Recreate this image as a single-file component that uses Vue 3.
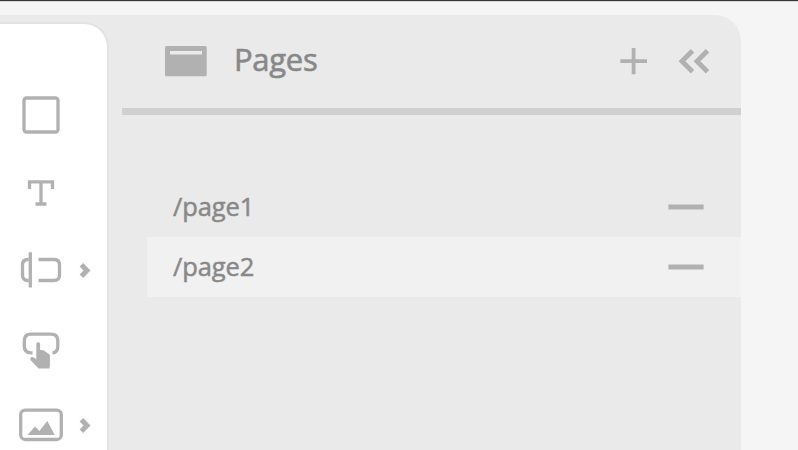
<script setup>
const pages = [
  { name: '/page1', selected: false },
  { name: '/page2', selected: true },
]
</script>

<template>
  <div class="editor">
    <div class="workspace">
      <nav class="tools">
        <div class="tool rect">
          <svg width="38" height="38" viewBox="22 96 38 38"><rect x="24" y="98" width="34" height="34" rx="2.5" class="line" /></svg>
        </div>
        <div class="tool type">
          <svg width="28" height="28" viewBox="27 179 28 28"><path d="M29.5 189V181.8H52.5V189M41 181.8V204M35.5 204H46.5" class="line" /></svg>
        </div>
        <div class="tool input">
          <svg width="42" height="38" viewBox="20 251 42 38"><path d="M28.5 259.5H28Q22.5 259.5 22.5 265V275Q22.5 280.5 28 280.5H28.5M38.5 259.5H54Q59.5 259.5 59.5 265V275Q59.5 280.5 54 280.5H38.5M30.3 252.3V287.5" class="line" /></svg>
          <svg class="more" width="12" height="18" viewBox="79 261 12 18"><path d="M81.4 264.7L87 270.5L81.4 276.3" class="chevron" /></svg>
        </div>
        <div class="tool button">
          <svg width="38" height="38" viewBox="22 332 38 38"><path d="M32.5 352.8H31Q24.3 352.8 24.3 346V341Q24.3 334.2 31 334.2H51Q57.8 334.2 57.8 341V346Q57.8 352.8 52.5 352.8" class="line" /><path d="M36.3 344Q36.3 342.2 38.2 342.2Q40.1 342.2 40.1 344V350L43.5 350.3L49.9 354.7V366L49.3 368.5H38.5L30.5 360Q29.6 358 31.5 357.1Q33 356.6 36.3 359.3Z" class="solid" /></svg>
        </div>
        <div class="tool image">
          <svg width="44" height="34" viewBox="19 408 44 34"><rect x="20.7" y="410.2" width="40.6" height="29.3" rx="4.5" class="line" /><path d="M27.5 435L35 426.5L39.3 431L47.3 421L54.8 435Z" class="solid" /></svg>
          <svg class="more" width="12" height="18" viewBox="79 416 12 18"><path d="M81.4 419.7L87 425.5L81.4 431.3" class="chevron" /></svg>
        </div>
      </nav>
      <section class="panel">
        <header class="header">
          <svg width="42" height="31" viewBox="165 46 42 31"><path fill-rule="evenodd" d="M166.5 46H205.2Q206.7 46 206.7 47.5V74.8Q206.7 76.3 205.2 76.3H166.5Q165 76.3 165 74.8V47.5Q165 46 166.5 46ZM170 51V54.6H202V51Z" class="solid" /></svg>
          <h1 class="title">Pages</h1>
          <svg class="add" width="28" height="28" viewBox="620 47 28 28"><path d="M620.3 61.2H647M633.6 48V74.2" class="plus" /></svg>
          <svg width="32" height="26" viewBox="678 48 32 26"><path d="M692.5 50.7L682 61.2L692.5 71.7M707.5 50.7L697 61.2L707.5 71.7" class="collapse" /></svg>
        </header>
        <ul class="pages">
          <li v-for="page in pages" :key="page.name" class="page" :class="{ selected: page.selected }">
            <span class="name">{{ page.name }}</span>
            <svg width="36" height="6" viewBox="0 0 36 6"><path d="M.4 3H35.6" class="minus" /></svg>
          </li>
        </ul>
      </section>
    </div>
  </div>
</template>

<style>
body { background: #f5f5f5; overflow: hidden; }
</style>

<style scoped>
.editor {
  box-sizing: border-box;
  height: 450px;
  padding-top: 14px;
  border-top: 1px solid #39363a;
  background: linear-gradient(#d8d7d8 1px, #f5f5f5 1px);
  overflow: hidden;
}
.workspace {
  display: flex;
  width: 741px;
  height: 435px;
  background: #eaeaea;
  border-top-right-radius: 26px;
  overflow: hidden;
}
.tools {
  box-sizing: border-box;
  width: 109px;
  margin-top: 7px;
  padding-top: 72px;
  border-top: 2px solid #e3e3e3;
  border-right: 2px solid #e3e3e3;
  border-top-right-radius: 25px;
  background: #fff;
  flex: none;
}
.tool { display: flex; align-items: center; }
.rect { padding-left: 22px; }
.type { padding-left: 27px; margin-top: 45px; }
.input { padding-left: 20px; margin-top: 44px; }
.button { padding-left: 22px; margin-top: 43px; }
.image { padding-left: 19px; margin-top: 38px; }
.input .more { margin-left: 17px; }
.image .more { margin-left: 16px; }
svg { display: block; flex: none; fill: none; }
.line { stroke: #b1b1b1; stroke-width: 3.3; }
.chevron { stroke: #b1b1b1; stroke-width: 5; }
.solid { fill: #b1b1b1; }
.plus { stroke: #b1b1b1; stroke-width: 3.8; }
.collapse { stroke: #b1b1b1; stroke-width: 4.8; }
.minus { stroke: #b1b1b1; stroke-width: 5.2; }
.panel { flex: 1; padding-left: 13px; }
.header {
  box-sizing: border-box;
  display: flex;
  align-items: center;
  height: 100px;
  padding: 0 31px 1px 43px;
  border-bottom: 7px solid #d0d0d0;
}
.title {
  flex: 1;
  margin: 0 0 5px 27px;
  font: 400 31px/40px "Open Sans", sans-serif;
  letter-spacing: -0.3px;
  color: #888;
  -webkit-text-stroke: 0.6px #888;
}
.add { margin-right: 30px; }
.pages { margin: 62px 0 0 25px; padding: 0; list-style: none; }
.page {
  box-sizing: border-box;
  display: flex;
  align-items: center;
  justify-content: space-between;
  height: 60px;
  padding: 0 37px 0 26px;
}
.selected { background: #f1f1f1; }
.name {
  padding-bottom: 2px;
  font: 400 25.5px/36px "Open Sans", sans-serif;
  letter-spacing: -0.1px;
  color: #888;
  -webkit-text-stroke: 0.5px #888;
}
</style>
